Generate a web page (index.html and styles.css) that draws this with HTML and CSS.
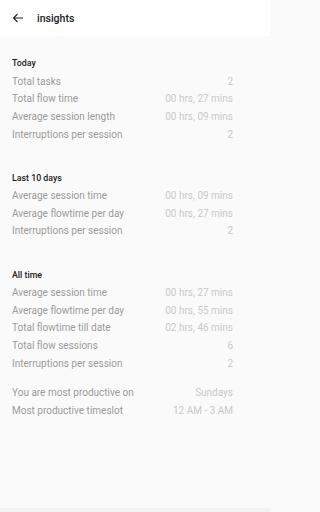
FILE: index.html
```html
<!DOCTYPE html>
<html>
<head>
<meta charset="utf-8">
<link rel="stylesheet" href="styles.css">
</head>
<body>
<div class="app">
  <header class="topbar">
    <svg class="back" width="12" height="12" viewBox="0 0 24 24"><path d="M22 12H3M11 4l-8 8 8 8" fill="none" stroke="#202020" stroke-width="2.2" stroke-linejoin="miter"/></svg>
    <span class="title">insights</span>
  </header>
  <main class="content">
    <section class="group">
      <div class="heading">Today</div>
      <div class="row"><span class="label">Total tasks</span><span class="value">2</span></div>
      <div class="row"><span class="label">Total flow time</span><span class="value">00 hrs, 27 mins</span></div>
      <div class="row"><span class="label">Average session length</span><span class="value">00 hrs, 09 mins</span></div>
      <div class="row"><span class="label">Interruptions per session</span><span class="value">2</span></div>
    </section>
    <section class="group">
      <div class="heading">Last 10 days</div>
      <div class="row"><span class="label">Average session time</span><span class="value">00 hrs, 09 mins</span></div>
      <div class="row"><span class="label">Average flowtime per day</span><span class="value">00 hrs, 27 mins</span></div>
      <div class="row"><span class="label">Interruptions per session</span><span class="value">2</span></div>
    </section>
    <section class="group">
      <div class="heading">All time</div>
      <div class="row"><span class="label">Average session time</span><span class="value">00 hrs, 27 mins</span></div>
      <div class="row"><span class="label">Average flowtime per day</span><span class="value">00 hrs, 55 mins</span></div>
      <div class="row"><span class="label">Total flowtime till date</span><span class="value">02 hrs, 46 mins</span></div>
      <div class="row"><span class="label">Total flow sessions</span><span class="value">6</span></div>
      <div class="row"><span class="label">Interruptions per session</span><span class="value">2</span></div>
    </section>
    <section class="group tight">
      <div class="row"><span class="label">You are most productive on</span><span class="value">Sundays</span></div>
      <div class="row"><span class="label">Most productive timeslot</span><span class="value">12 AM - 3 AM</span></div>
    </section>
  </main>
  <div class="bottom"></div>
</div>
</body>
</html>
```
FILE: styles.css
```css
* { box-sizing: border-box; }
html, body { margin: 0; padding: 0; }
html { background: #fafafa; }
body {
  font-family: Roboto, "Noto Sans", sans-serif;
  background: #fafafa;
  width: 270px;
  height: 512px;
  overflow: hidden;
}
.app {
  display: flex;
  flex-direction: column;
  height: 512px;
}
.topbar {
  height: 36px;
  background: #ffffff;
  display: flex;
  align-items: center;
  padding-left: 12px;
  flex: none;
}
.back { flex: none; }
.title {
  margin-left: 13px;
  font-size: 10.5px;
  font-weight: 500;
  color: #202020;
}
.content {
  flex: 1;
  background: #fafafa;
  padding: 19.2px 37px 0 12px;
  display: flex;
  flex-direction: column;
  gap: 26.5px;
}
.group { display: flex; flex-direction: column; }
.group.tight { margin-top: -14.5px; }
.heading {
  height: 17.6px;
  line-height: 17.6px;
  font-size: 8.8px;
  font-weight: 500;
  color: #1a1a1a;
}
.row {
  height: 17.6px;
  line-height: 17.6px;
  display: flex;
  justify-content: space-between;
  font-size: 10px;
}
.label { color: #9a9a9a; }
.value { color: #c9c9c9; }
.bottom {
  height: 4px;
  background: #f3f3f3;
  flex: none;
}
```
